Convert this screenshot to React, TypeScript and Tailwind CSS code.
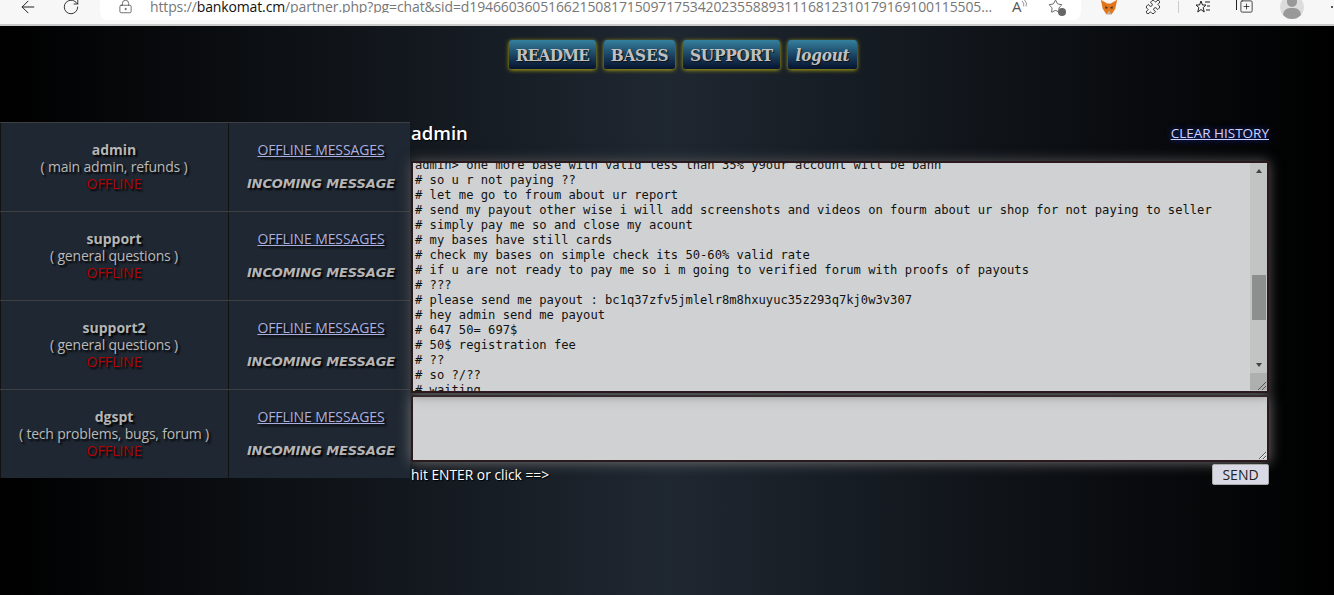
import { ArrowLeft, RotateCw, LockKeyhole, Puzzle, SquarePlus, Star } from "lucide-react";

const contacts = [
  { name: "admin", role: "( main admin, refunds )" },
  { name: "support", role: "( general questions )" },
  { name: "support2", role: "( general questions )" },
  { name: "dgspt", role: "( tech problems, bugs, forum )" },
];

const chatLines = [
  "admin> one more base with valid less than 35% y9our account will be bann",
  "# so u r not paying ??",
  "# let me go to froum about ur report",
  "# send my payout other wise i will add screenshots and videos on fourm about ur shop for not paying to seller",
  "# simply pay me so and close my acount",
  "# my bases have still cards",
  "# check my bases on simple check its 50-60% valid rate",
  "# if u are not ready to pay me so i m going to verified forum with proofs of payouts",
  "# ???",
  "# please send me payout : bc1q37zfv5jmlelr8m8hxuyuc35z293q7kj0w3v307",
  "# hey admin send me payout",
  "# 647 50= 697$",
  "# 50$ registration fee",
  "# ??",
  "# so ?/??",
  "# waiting",
];

const navClass =
  "h-[29px] rounded-[3px] bg-gradient-to-b from-[#35809f] to-[#07132f] text-center font-['DejaVu_Serif_Condensed','DejaVu_Serif',serif] text-[17px] leading-[30px] font-bold tracking-[-0.2px] whitespace-nowrap text-[#c0c0c0] shadow-[0_1px_4px_#b3ad10] [text-shadow:1px_1px_1px_#111]";

const Grip = () => (
  <svg viewBox="0 0 12 12" className="absolute right-0 bottom-0 h-3 w-3 stroke-[#555]">
    <path d="M3 11 L11 3 M7 11 L11 7" fill="none" />
  </svg>
);

const BrowserBar = () => (
  <div className="flex h-[26px] shrink-0 items-start border-b-2 border-[#c9c9c9] bg-[#f7f7f7] text-[#222]">
    <div className="flex h-[13px] w-[100px] items-center gap-[24px] pl-[18px]">
      <ArrowLeft size={20} strokeWidth={1.2} />
      <RotateCw size={18} strokeWidth={1.2} />
    </div>
    <div className="flex h-[20px] w-[981px] overflow-hidden rounded-b-lg bg-white">
      <div className="flex h-[13px] items-center pl-[18px] font-['Open_Sans','Noto_Sans',sans-serif] text-[14px] leading-[13px] tracking-[-0.13px] whitespace-nowrap text-[#777]">
        <LockKeyhole size={15} strokeWidth={1.2} className="mr-[17px] text-[#444]" />
        <span>https://</span>
        <span className="text-[#111]">bankomat.cm</span>
        <span className="w-[714px] truncate">/partner.php?pg=chat&amp;sid=d19466036051662150817150971753420235588931116812310179169100115505271610000</span>
        <span className="ml-[13px] text-[15px] text-[#555]">A</span>
        <svg viewBox="0 0 8 10" className="mb-[6px] h-[8px] w-[7px] fill-none stroke-[#777]">
          <path d="M1 1 Q4 4 3 8 M4 0 Q8 4 6 8" />
        </svg>
        <span className="relative ml-[20px] block">
          <Star size={15} strokeWidth={1.2} className="text-[#333]" />
          <span className="absolute right-[-3px] bottom-[-2px] h-[8px] w-[8px] rounded-full bg-[#666]" />
        </span>
      </div>
    </div>
    <div className="flex h-[13px] flex-1 items-center text-[#222]">
      <svg viewBox="0 0 20 18" className="ml-[19px] h-[18px] w-[18px] shrink-0">
        <path d="M1 1 L8 5 H12 L19 1 L17 11 L13 17 H7 L3 11 Z" fill="#e2761b" />
        <path d="M6 8 L9 10 L6 11 Z M14 8 L11 10 L14 11 Z" fill="#3b2a20" />
        <path d="M7 17 L10 13 L13 17 Z" fill="#c0ad9e" />
      </svg>
      <Puzzle size={16} strokeWidth={1.3} className="ml-[27px] shrink-0" />
      <div className="ml-[17px] h-[12px] w-px shrink-0 bg-[#ccc]" />
      <svg viewBox="0 0 16 16" className="ml-[16px] h-[16px] w-[16px] shrink-0 fill-none stroke-[#222]">
        <path d="M6 2 L7.5 6 H11 L8.2 8.6 L9.2 13 L6 10.5 L2.8 13 L3.8 8.6 L1 6 H4.5 Z" />
        <path d="M10 3 H15 M12 7 H15 M11 11 H15" />
      </svg>
      <span className="relative ml-[28px] block shrink-0">
        <SquarePlus size={15} strokeWidth={1.3} />
        <span className="absolute top-[-1px] left-[-3px] h-[12px] w-[8px] rounded-tl-[3px] border-t border-l border-[#222]" />
      </span>
      <div className="relative ml-[26px] h-[24px] w-[24px] shrink-0 overflow-hidden rounded-full bg-[#dcdcdc]">
        <div className="absolute top-[1px] left-[7px] h-[11px] w-[10px] rounded-full bg-[#999]" />
        <div className="absolute top-[13px] left-[3px] h-[14px] w-[18px] rounded-full bg-[#999]" />
      </div>
      <span className="ml-[27px] h-[2px] w-[2px] shrink-0 rounded-full bg-[#222]" />
    </div>
  </div>
);

const ContactRow = ({ name, role }: { name: string; role: string }) => (
  <div className="grid h-[89px] grid-cols-[229px_181px] border-t border-[#3d3f42] bg-[#1f2732] font-['Open_Sans','Noto_Sans',sans-serif] text-[14px] leading-[17px] [text-shadow:2px_2px_2px_#000]">
    <div className="flex flex-col items-center justify-center border-x border-[#111] pr-[1px] pb-[1px] text-center text-[#b9b9b9]">
      <b className="text-[#b5b5b5]">{name}</b>
      <span className="tracking-[-0.2px]">{role}</span>
      <span className="text-[#b50000]">OFFLINE</span>
    </div>
    <div className="flex flex-col items-center pt-[18px] pl-[3px] text-center">
      <a className="tracking-[-0.1px] text-[#a9aede] underline">OFFLINE MESSAGES</a>
      <i className="mt-[17px] font-['DejaVu_Sans',sans-serif] text-[13px] font-bold tracking-[-0.1px] text-[#b5b5b5]">INCOMING MESSAGE</i>
    </div>
  </div>
);

const ChatLog = () => (
  <div className="relative flex h-[232px] w-[858px] overflow-hidden border-2 border-[#2a1a1e] bg-[#d0d1d2] shadow-[0_0_12px_#555]">
    <div className="flex-1 overflow-hidden pl-[2px]">
      <pre className="-mt-[5px] font-['DejaVu_Sans_Mono',monospace] text-[12.15px] leading-[15px] text-[#111]">
        {chatLines.join("\n")}
      </pre>
    </div>
    <div className="flex w-[17px] flex-col items-center bg-[#c2c3c3]">
      <span className="mt-[6px] h-0 w-0 border-x-[3.5px] border-b-[4px] border-x-transparent border-b-[#444]" />
      <div className="mt-[102px] h-[45px] w-[14px] bg-[#8d8e8e]" />
      <span className="mt-[43px] h-0 w-0 border-x-[3.5px] border-t-[4px] border-x-transparent border-t-[#444]" />
      <div className="mt-[6px] h-[17px] w-full bg-[#aeafaf]" />
    </div>
    <Grip />
  </div>
);

const App = () => (
  <div className="flex h-[595px] w-[1334px] flex-col overflow-hidden bg-[linear-gradient(90deg,#000_0%,#1f2731_50%,#000_100%)]">
    <BrowserBar />
    <nav className="mt-[14px] flex justify-center gap-[8px] pl-[32px]">
      <a className={navClass + " w-[87px] tracking-[-0.8px]"}>README</a>
      <a className={navClass + " w-[71px]"}>BASES</a>
      <a className={navClass + " w-[97px]"}>SUPPORT</a>
      <a className={navClass + " w-[69px] italic"}>logout</a>
    </nav>
    <div className="mt-[53px] flex">
      <div className="w-[410px] shrink-0">
        {contacts.map((c) => (
          <ContactRow key={c.name} name={c.name} role={c.role} />
        ))}
      </div>
      <div className="ml-[1px] w-[858px]">
        <div className="flex h-[39px] items-start justify-between">
          <span className="mt-[-1px] font-['Open_Sans','Noto_Sans',sans-serif] text-[18.5px] leading-[24px] font-semibold text-white [text-shadow:1px_1px_1px_#000]">
            admin
          </span>
          <a className="mt-[3px] font-['Open_Sans','Noto_Sans',sans-serif] text-[13.5px] leading-[17px] text-[#cdd3ff] underline [text-shadow:0_0_6px_#2a3fd0]">
            CLEAR HISTORY
          </a>
        </div>
        <ChatLog />
        <textarea className="mt-[2px] block h-[67px] w-[858px] rounded-[2px] border-2 border-[#2a1a1e] bg-[#d0d1d2] shadow-[0_0_14px_#777] outline-none" />
        <div className="mt-[3px] flex items-start justify-between">
          <span className="mt-[1px] font-['Open_Sans','Noto_Sans',sans-serif] text-[13.8px] leading-[17px] font-medium text-white [text-shadow:1px_1px_1px_#000]">
            hit ENTER or click ==&gt;
          </span>
          <button className="-mt-[1px] h-[21px] w-[57px] rounded-[2px] border border-[#aaa] bg-[#d9d9e6] font-['Open_Sans','Noto_Sans',sans-serif] text-[14px] leading-[17px] text-[#222]">
            SEND
          </button>
        </div>
      </div>
    </div>
  </div>
);

export default App;
